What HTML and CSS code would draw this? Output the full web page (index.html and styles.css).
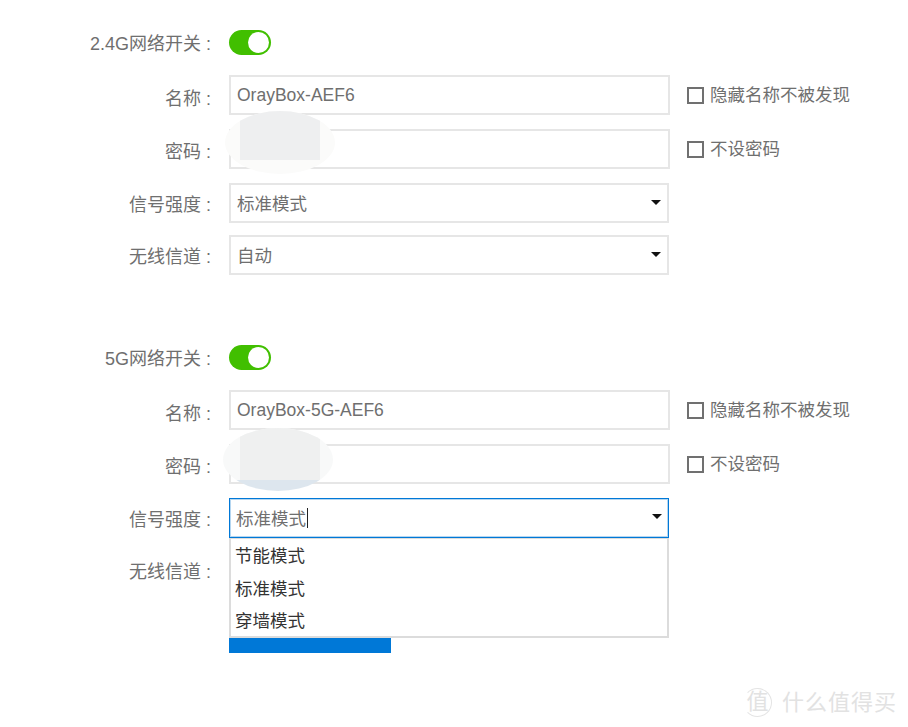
FILE: index.html
```html
<!DOCTYPE html>
<html lang="zh-CN">
<head>
  <meta charset="UTF-8">
  <title>无线设置</title>
  <meta name="viewport" content="width=device-width, initial-scale=1.0">
  <link rel="stylesheet" href="styles.css">
</head>
<body>
  <div class="page">
    <div class="section">
      <div class="row row-switch">
        <label class="label">2.4G网络开关 :</label>
        <span class="switch"><span class="knob"></span></span>
      </div>
      <div class="row">
        <label class="label">名称 :</label>
        <div class="field">OrayBox-AEF6</div>
        <div class="check"><span class="box"></span>隐藏名称不被发现</div>
      </div>
      <div class="row row-pass">
        <label class="label">密码 :</label>
        <div class="field"></div>
        <div class="check"><span class="box"></span>不设密码</div>
      </div>
      <div class="row row-select">
        <label class="label">信号强度 :</label>
        <div class="field select">标准模式<span class="arrow"></span></div>
      </div>
      <div class="row row-select">
        <label class="label">无线信道 :</label>
        <div class="field select">自动<span class="arrow"></span></div>
      </div>
    </div>

    <div class="section">
      <div class="row row-switch">
        <label class="label">5G网络开关 :</label>
        <span class="switch"><span class="knob"></span></span>
      </div>
      <div class="row">
        <label class="label">名称 :</label>
        <div class="field">OrayBox-5G-AEF6</div>
        <div class="check"><span class="box"></span>隐藏名称不被发现</div>
      </div>
      <div class="row row-pass">
        <label class="label">密码 :</label>
        <div class="field"></div>
        <div class="check"><span class="box"></span>不设密码</div>
      </div>
      <div class="row row-select">
        <label class="label">信号强度 :</label>
        <div class="field select focus">标准模式<span class="caret"></span><span class="arrow"></span>
          <ul class="menu">
            <li>节能模式</li>
            <li>标准模式</li>
            <li>穿墙模式</li>
          </ul>
          <div class="save"></div>
        </div>
      </div>
      <div class="row row-select">
        <label class="label">无线信道 :</label>
      </div>
    </div>

    <!-- blurred-out passwords -->
    <div class="smudge smudge-one"><span class="smudge-block"></span></div>
    <div class="smudge smudge-two"><span class="smudge-block"></span></div>

    <div class="watermark">
      <span class="mark">值</span>
      <span class="mark-text">什么值得买</span>
    </div>
  </div>
</body>
</html>
```

FILE: styles.css
```css
* {
  box-sizing: border-box;
}

body {
  margin: 0;
  background: #fff;
  font-family: "Liberation Sans", "Noto Sans CJK SC", sans-serif;
  font-size: 18px;
  color: #6f6f6f;
}

.page {
  position: relative;
  width: 908px;
  height: 727px;
  overflow: hidden;
  padding-top: 30px;
}

.section {
  margin-bottom: 70px;
}

.row {
  display: flex;
  align-items: center;
  height: 40px;
  margin-bottom: 14px;
}

.row-switch {
  height: 25px;
  margin-bottom: 20px;
}

.row-select {
  margin-bottom: 12px;
}

.label {
  width: 211px;
  margin-right: 18px;
  padding-top: 3px;
  text-align: right;
  white-space: nowrap;
}

.row-pass .label {
  padding-top: 1px;
}

.row-switch .label {
  padding-top: 0;
  padding-bottom: 2px;
}

.row-select .label {
  padding-top: 0;
}

.switch {
  display: flex;
  align-items: center;
  justify-content: flex-end;
  width: 42px;
  height: 25px;
  padding-right: 2px;
  border-radius: 13px;
  background: #41bf00;
}

.knob {
  width: 21px;
  height: 21px;
  border-radius: 50%;
  background: #fff;
}

.field {
  position: relative;
  display: flex;
  align-items: center;
  width: 441px;
  height: 40px;
  padding-left: 6px;
  padding-top: 1px;
  border: 2px solid #e6e6e6;
  background: #fff;
  font-size: 17.5px;
}

.select {
  width: 440px;
  padding-top: 0;
  padding-bottom: 1px;
}

.focus {
  padding-left: 6px;
  border: 1px solid #0078d7;
  box-shadow: inset 0 0 0 1px #b5d6f0;
}

.caret {
  width: 1px;
  height: 20px;
  margin-left: 1px;
  background: #222;
}

.arrow {
  position: absolute;
  top: 15px;
  right: 6px;
  border: 5px solid transparent;
  border-top: 5px solid #111;
  border-bottom: 0;
}

.check {
  display: flex;
  align-items: center;
  margin-left: 17px;
  padding-bottom: 4px;
  font-size: 17.5px;
}

.box {
  width: 17px;
  height: 17px;
  margin-top: 4px;
  margin-right: 6px;
  border: 2px solid #707070;
}

.menu {
  position: absolute;
  z-index: 2;
  top: 39px;
  left: -1px;
  width: 440px;
  height: 100px;
  margin: 0;
  padding: 1px 0 0 4px;
  list-style: none;
  background: #fff;
  border: 2px solid #dcdcdc;
  border-width: 1px 2px 2px 2px;
  color: #333;
}

.menu li {
  height: 32.5px;
  line-height: 32px;
}

.save {
  position: absolute;
  z-index: 2;
  top: 139px;
  left: -1px;
  width: 162px;
  height: 15px;
  background: #0078d7;
}

.smudge {
  position: absolute;
  overflow: hidden;
  width: 110px;
  height: 63px;
  border-radius: 50%;
}

.smudge-one {
  left: 225px;
  top: 111px;
  background: #fbfbfa;
}

.smudge-two {
  left: 223px;
  top: 428px;
  background: linear-gradient(to bottom, #f8f9f9 52px, #dde6ee 52px);
}

.smudge-block {
  position: absolute;
  left: 15px;
  top: 0;
  width: 80px;
  height: 49px;
  background: #eeeff0;
}

.smudge-two .smudge-block {
  left: 17px;
  height: 52px;
  background: #eff0f0;
}

.watermark {
  position: absolute;
  left: 743px;
  top: 688px;
  display: flex;
  align-items: center;
  white-space: nowrap;
  color: #e2e2e2;
}

.mark {
  flex: none;
  width: 29px;
  height: 29px;
  border: 1px solid #e4e4e4;
  border-left-color: transparent;
  border-radius: 50%;
  font-size: 22px;
  line-height: 25px;
  text-align: center;
}

.mark-text {
  flex: none;
  margin-left: 10px;
  font-size: 22px;
  line-height: 29px;
  letter-spacing: 1px;
}
```
